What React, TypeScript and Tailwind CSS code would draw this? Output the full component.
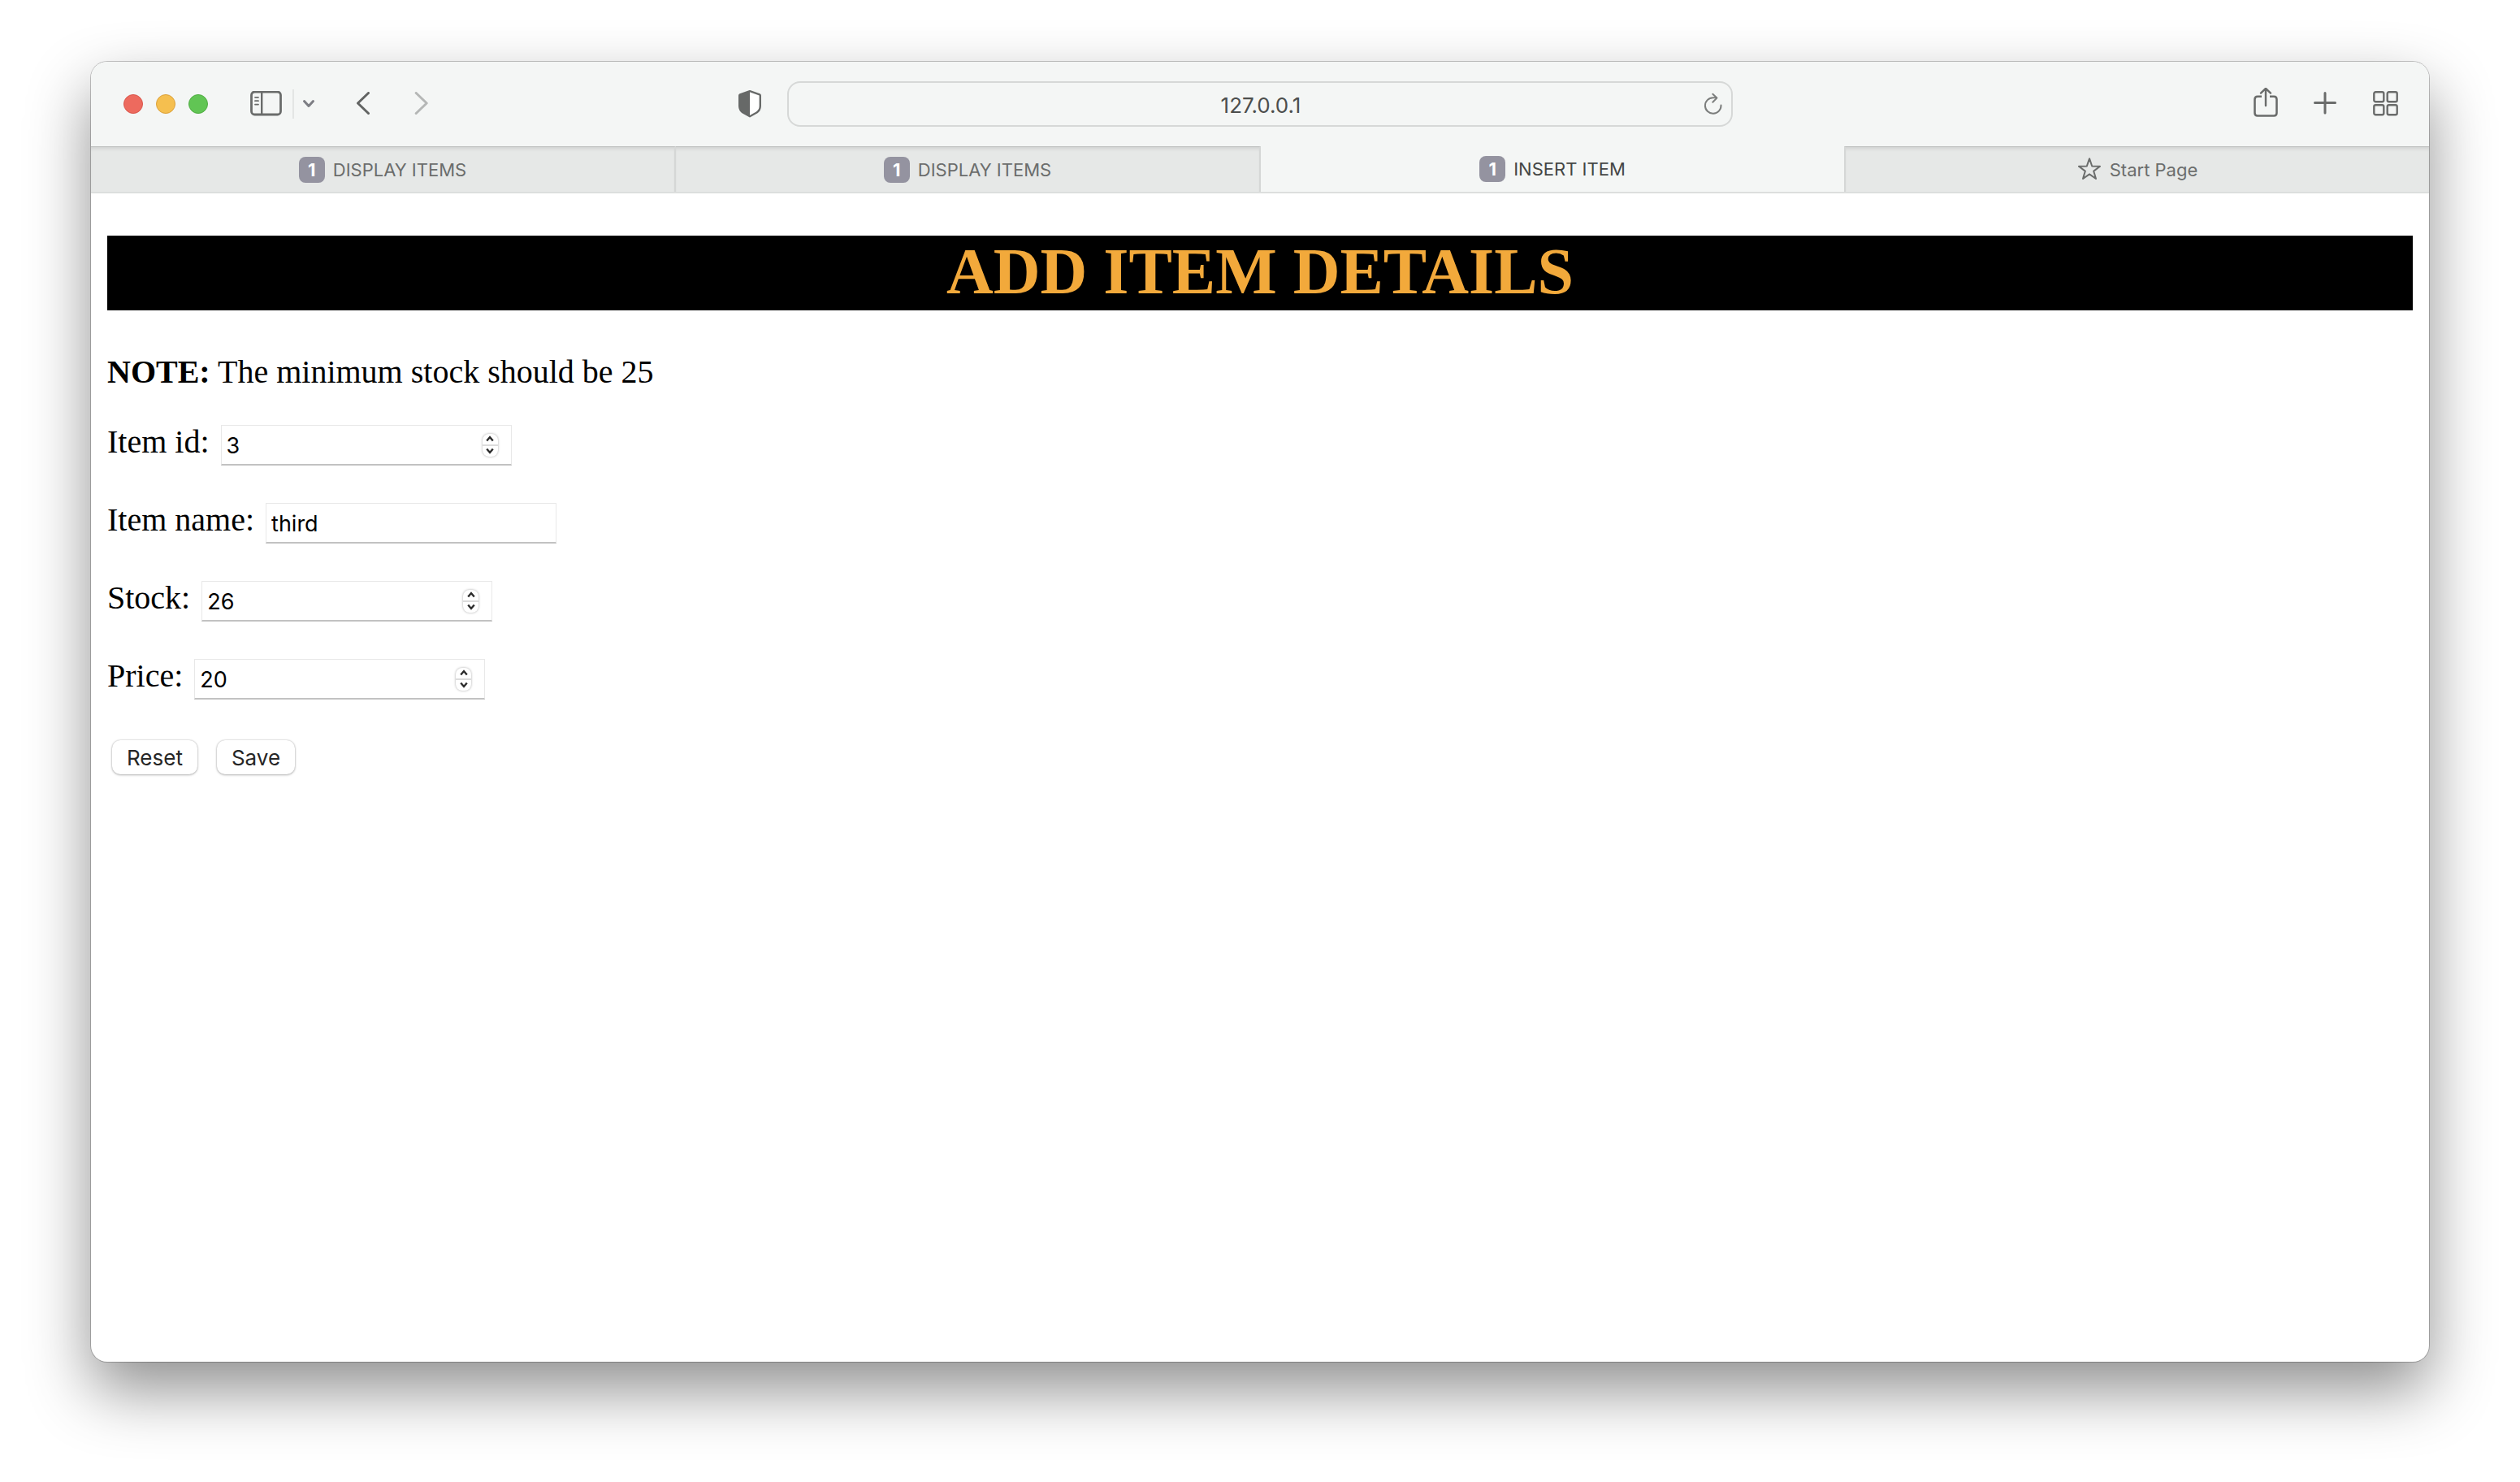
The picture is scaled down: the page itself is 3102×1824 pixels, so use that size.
import React, { useState } from "react";

type TabProps = { title: string; badge?: string; active?: boolean; last?: boolean };

function StarIcon() {
  return (
    <svg width="30" height="30" viewBox="0 0 30 30" fill="none" stroke="#6b6d6c" strokeWidth="2" strokeLinejoin="round">
      <path d="M15 1.2 L18.2 10.5 L28 10.7 L20.2 16.6 L23 26 L15 20.4 L7 26 L9.8 16.6 L2 10.7 L11.8 10.5 Z" />
    </svg>
  );
}

function Tab({ title, badge, active, last }: TabProps) {
  const look = active
    ? "bg-[#f4f6f5] text-[#444645]"
    : "bg-[#e6e8e7] text-[#6b6d6c] border-t border-t-[#bfc1c0] shadow-[inset_0_4px_4px_-2px_rgba(0,0,0,0.10)]";
  const edge = last || active ? "" : "border-r-2 border-r-[#d5d7d6]";
  return (
    <button type="button" role="tab" aria-selected={!!active} className={`flex h-14 min-w-0 flex-1 items-center justify-center text-[22px] leading-7 ${look} ${edge} ${last ? "border-l-2 border-l-[#d5d7d6]" : ""}`}>
      {badge ? (
        <span className="mr-[10px] flex size-8 items-center justify-center rounded-lg bg-[#9493a0] font-bold text-white">{badge}</span>
      ) : (
        <span className="mr-[10px]">
          <StarIcon />
        </span>
      )}
      <span className="truncate">{title}</span>
    </button>
  );
}

function Toolbar() {
  return (
    <div className="grid h-[104px] grid-cols-[1fr_minmax(0,1164px)_1fr] items-center">
      <div className="flex items-center pr-8 pl-10">
        <div className="flex gap-4">
          <button type="button" aria-label="Close" className="size-6 rounded-full border border-[#d9564c] bg-[#ed6a5e]" />
          <button type="button" aria-label="Minimize" className="size-6 rounded-full border border-[#dba13b] bg-[#f5bf4f]" />
          <button type="button" aria-label="Zoom" className="size-6 rounded-full border border-[#50ac43] bg-[#61c554]" />
        </div>
        <button type="button" aria-label="Sidebar" className="ml-[52px]">
          <svg width="39" height="32" viewBox="0 0 39 32" fill="none" stroke="#6a6c6b">
            <rect x="1.5" y="1" width="36" height="28" rx="4" strokeWidth="2.8" />
            <path d="M14.2 1V29" strokeWidth="2.4" />
            <path d="M6 7.8H10M6 12.2H10M6 16.6H10" strokeWidth="1.8" strokeLinecap="round" />
          </svg>
        </button>
        <div className="ml-[13px] h-9 w-[2px] bg-[#e3e5e4]" />
        <button type="button" aria-label="Tab groups" className="ml-[10px]">
          <svg width="16" height="12" viewBox="0 0 16 12" fill="none" stroke="#7d7e84" strokeWidth="3" strokeLinecap="round" strokeLinejoin="round">
            <path d="M2.5 2.5L8 8.5L13.5 2.5" />
          </svg>
        </button>
        <button type="button" aria-label="Back" className="ml-[50px]">
          <svg width="18" height="30" viewBox="0 0 18 30" fill="none" stroke="#626463" strokeWidth="3" strokeLinecap="round" strokeLinejoin="round">
            <path d="M15.5 1.5L2.5 14L15.5 26.5" />
          </svg>
        </button>
        <button type="button" aria-label="Forward" className="ml-[53px]">
          <svg width="18" height="30" viewBox="0 0 18 30" fill="none" stroke="#b5b7b6" strokeWidth="3" strokeLinecap="round" strokeLinejoin="round">
            <path d="M3.2 1.5L16.2 14L3.2 26.5" />
          </svg>
        </button>
        <button type="button" aria-label="Privacy report" className="ml-auto">
          <svg width="28" height="34" viewBox="0 0 28 34">
            <path d="M14 1.2L26 5.3Q26.8 5.7 26.8 6.5V19.5Q26.8 24.5 22.5 27.5L14 32.2L5.5 27.5Q1.2 24.5 1.2 19.5V6.5Q1.2 5.7 2 5.3Z" fill="#fff" stroke="#676968" strokeWidth="2.4" strokeLinejoin="round" />
            <path d="M14 1.2L2 5.3Q1.2 5.7 1.2 6.5V19.5Q1.2 24.5 5.5 27.5L14 32.2Z" fill="#676968" />
          </svg>
        </button>
      </div>
      <div className="flex h-14 items-center rounded-2xl border-2 border-[#d6d8d7] pr-[10px] pl-3">
        <input aria-label="Address" defaultValue="127.0.0.1" className="min-w-0 flex-1 bg-transparent pt-[3px] pl-6 text-center text-[26px] leading-8 text-[#4c4e4d] outline-none" />
        <button type="button" aria-label="Reload">
          <svg width="24" height="28" viewBox="0 0 24 28" fill="none" stroke="#7c7e7d" strokeWidth="2" strokeLinecap="round" strokeLinejoin="round">
            <path d="M21.5 15.6A9.8 9.8 0 1 1 11.7 6.2H15.8" />
            <path d="M11.3 1.8L16.4 6.6L11.3 11.8" />
          </svg>
        </button>
      </div>
      <div className="flex items-center justify-end pr-[38px]">
        <button type="button" aria-label="Share">
          <svg width="30" height="40" viewBox="0 0 30 40" fill="none" stroke="#6a6c6b" strokeWidth="2.6" strokeLinecap="round" strokeLinejoin="round">
            <path d="M10 10.8H5Q1.5 10.8 1.5 14.3V31Q1.5 34.5 5 34.5H25Q28.5 34.5 28.5 31V14.3Q28.5 10.8 25 10.8H20" strokeLinecap="butt" />
            <path d="M15 22V1.2M9 6.6L15 0.8L21 6.6" strokeWidth="2.4" />
          </svg>
        </button>
        <button type="button" aria-label="New tab" className="ml-11">
          <svg width="28" height="30" viewBox="0 0 28 30" fill="none" stroke="#6a6c6b" strokeWidth="3" strokeLinecap="round">
            <path d="M14 1.5V26M1.5 13.5H26.5" />
          </svg>
        </button>
        <button type="button" aria-label="Tab overview" className="ml-[45px]">
          <svg width="31" height="32" viewBox="0 0 31 32" fill="none" stroke="#6a6c6b" strokeWidth="2.4">
            <rect x="1.3" y="1.2" width="12" height="12" rx="2" />
            <rect x="17.7" y="1.2" width="12" height="12" rx="2" />
            <rect x="1.3" y="17.3" width="12" height="12" rx="2" />
            <rect x="17.7" y="17.3" width="12" height="12" rx="2" />
          </svg>
        </button>
      </div>
    </div>
  );
}

type FieldProps = {
  id: string;
  label: string;
  value: string;
  numeric?: boolean;
  onChange: (value: string) => void;
};

function Field({ id, label, value, numeric, onChange }: FieldProps) {
  const step = (by: number) => onChange(String(Number(value) + by));
  return (
    <div className="flex items-start gap-[14px]">
      <label htmlFor={id} className="text-[40px] leading-[42px]">
        {label}
      </label>
      <div className="flex h-[50px] w-[358px] items-center border border-b-2 border-[#e8e8e8] border-b-[#c2c2c2] bg-white pr-4 pl-[6px]">
        <input
          id={id}
          type={numeric ? "number" : "text"}
          value={value}
          onChange={(e) => onChange(e.target.value)}
          className="min-w-0 flex-1 appearance-none bg-transparent pt-[3px] font-[Inter,sans-serif] text-[27px] leading-8 outline-none [appearance:textfield] [&::-webkit-inner-spin-button]:appearance-none"
        />
        {numeric && (
          <div className="flex h-7 w-[19px] flex-col overflow-hidden rounded-lg bg-white shadow-[0_0_3px_rgba(0,0,0,0.35)]">
            <button type="button" aria-label={`Increase ${label}`} onClick={() => step(1)} className="flex flex-1 items-center justify-center border-b-2 border-[#dcdcdc]">
              <svg width="10" height="8" viewBox="0 0 10 8" fill="none" stroke="#2b2b2b" strokeWidth="2.4">
                <path d="M1.2 6.5L5 2L8.8 6.5" />
              </svg>
            </button>
            <button type="button" aria-label={`Decrease ${label}`} onClick={() => step(-1)} className="flex flex-1 items-center justify-center">
              <svg width="10" height="8" viewBox="0 0 10 8" fill="none" stroke="#2b2b2b" strokeWidth="2.4">
                <path d="M1.2 1.5L5 6L8.8 1.5" />
              </svg>
            </button>
          </div>
        )}
      </div>
    </div>
  );
}

const initial = { id: "3", name: "third", stock: "26", price: "20" };

export default function App() {
  const [item, setItem] = useState(initial);
  const set = (key: keyof typeof initial) => (value: string) => setItem({ ...item, [key]: value });
  const button =
    "rounded-[10px] bg-white px-[18px] pt-[6px] pb-1 font-[Inter,sans-serif] text-[26px] leading-8 text-[#262626] shadow-[0_0_2px_rgba(0,0,0,0.25),0_1px_3px_rgba(0,0,0,0.25)]";

  return (
    <div className="flex min-h-screen flex-col bg-white px-28 pt-[76px] pb-[148px] text-black">
      <div className="flex flex-1 flex-col overflow-hidden rounded-[20px] bg-white shadow-[0_0_0_1px_rgba(0,0,0,0.22),0_35px_78px_rgba(0,0,0,0.44)]">
        <header className="bg-[#f4f6f5] font-[Inter,sans-serif]">
          <Toolbar />
          <div role="tablist" className="flex border-b-2 border-[#dcdedd]">
            <Tab badge="1" title="DISPLAY ITEMS" />
            <Tab badge="1" title="DISPLAY ITEMS" />
            <Tab badge="1" title="INSERT ITEM" active />
            <Tab title="Start Page" last />
          </div>
        </header>
        <main className="flex-1 px-5 pt-[52px] font-['Liberation_Serif',serif]">
          <h1 className="bg-black pb-1 text-center text-[80px] leading-[88px] font-bold text-[#f2a93b]">ADD ITEM DETAILS</h1>
          <p className="mt-[53px] text-[40px] leading-[46px]">
            <b>NOTE:</b> The minimum stock should be 25
          </p>
          <form className="mt-[42px] flex flex-col gap-[46px]" onSubmit={(e) => e.preventDefault()}>
            <Field id="item-id" label="Item id:" value={item.id} numeric onChange={set("id")} />
            <Field id="item-name" label="Item name:" value={item.name} onChange={set("name")} />
            <Field id="stock" label="Stock:" value={item.stock} numeric onChange={set("stock")} />
            <Field id="price" label="Price:" value={item.price} numeric onChange={set("price")} />
            <div className="flex gap-6 px-[6px] pt-1">
              <button type="button" className={button} onClick={() => setItem(initial)}>
                Reset
              </button>
              <button type="submit" className={button}>
                Save
              </button>
            </div>
          </form>
        </main>
      </div>
    </div>
  );
}
